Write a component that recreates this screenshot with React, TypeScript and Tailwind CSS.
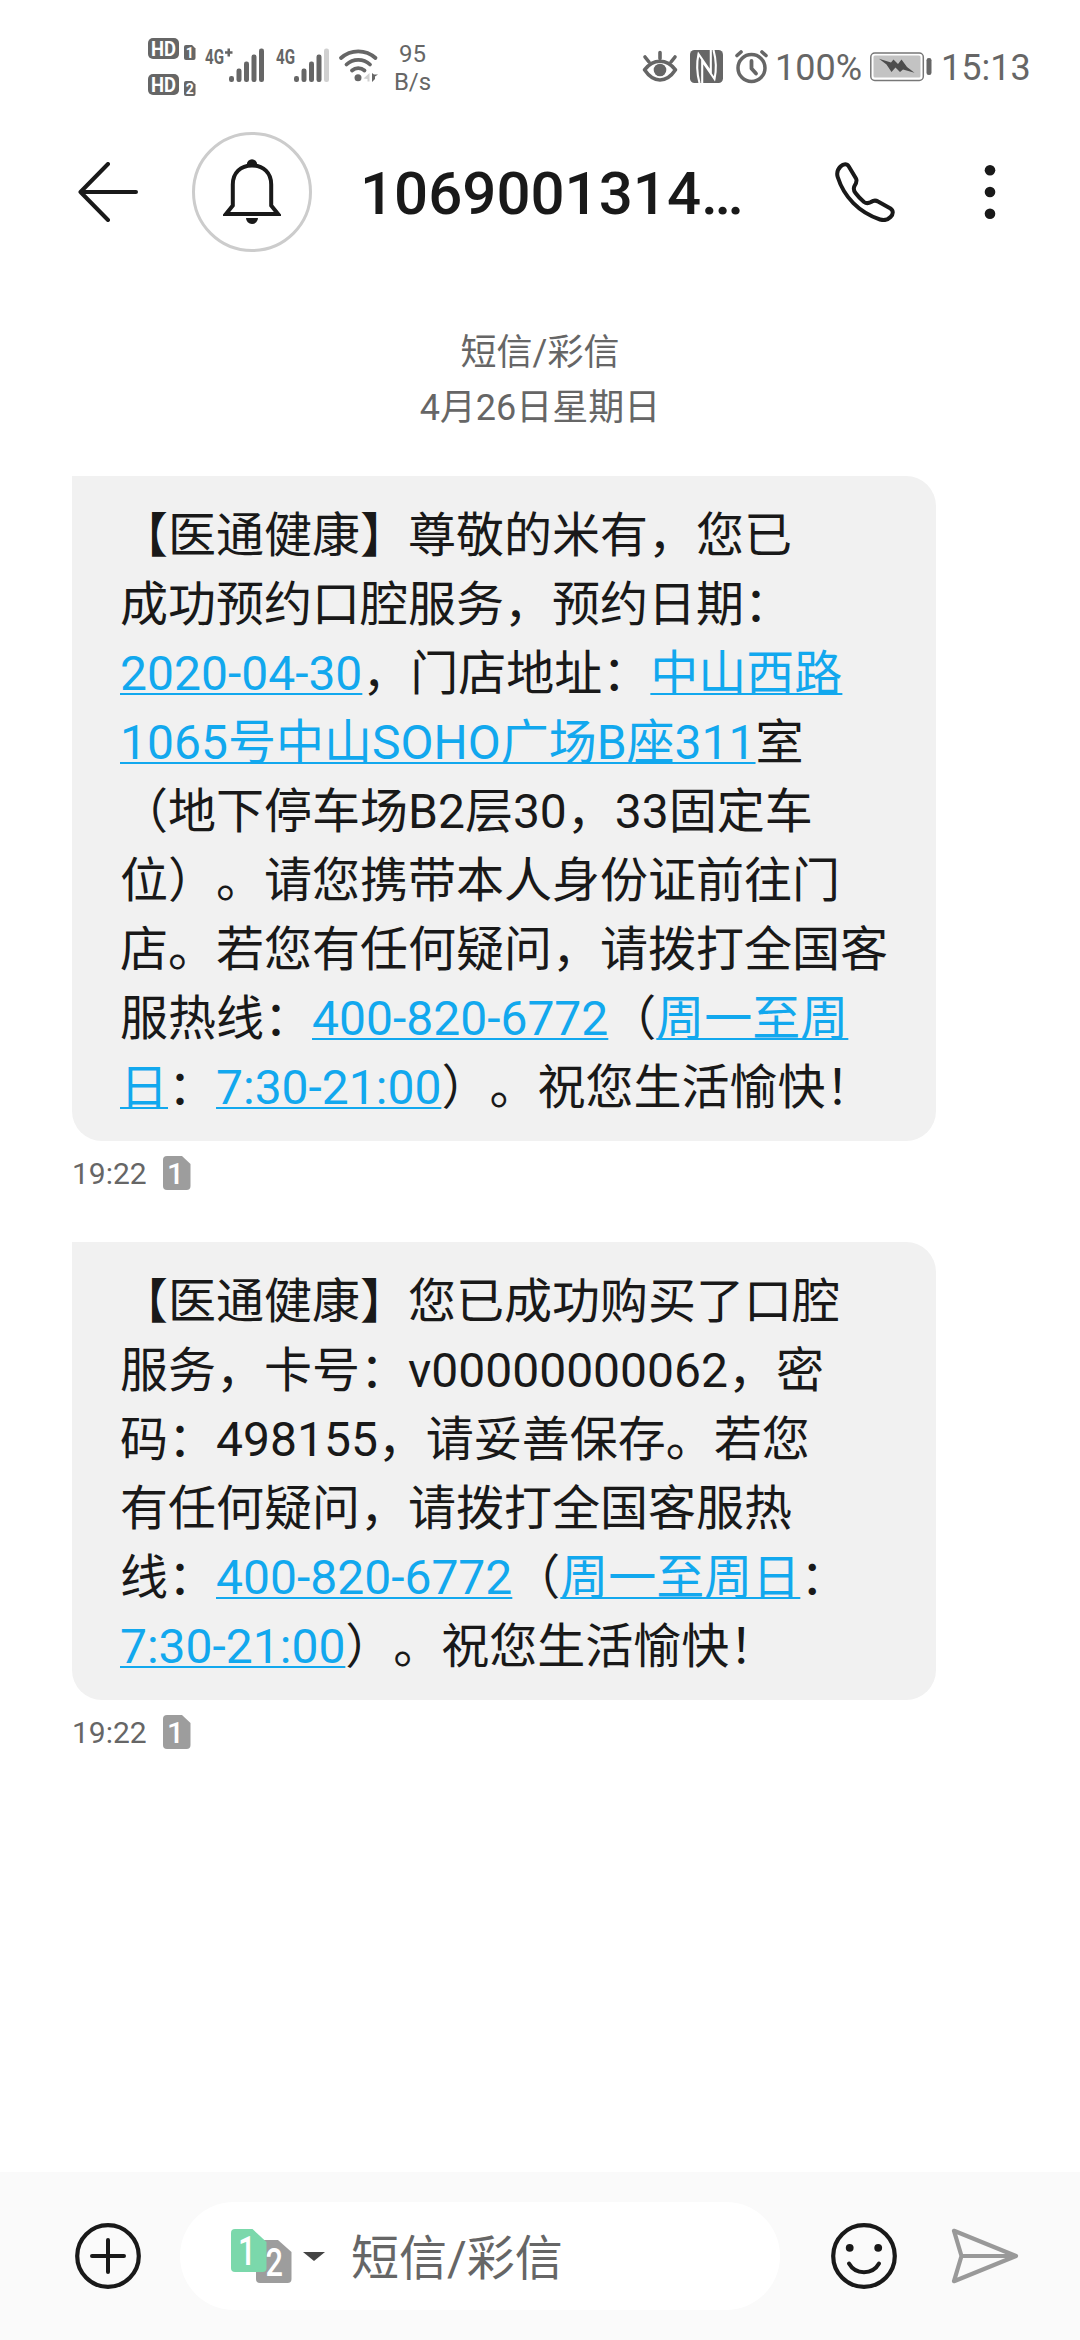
import { Fragment } from "react";
import type { ReactNode } from "react";

// A piece of a message line, links are shown underlined
interface Segment {
  text: string;
  link?: boolean;
}

interface Message {
  id: number;
  lines: Segment[][];
  time: string;
  sim: string;
}

const messages: Message[] = [
  {
    id: 1,
    time: "19:22",
    sim: "1",
    lines: [
      [{ text: "【医通健康】尊敬的米有，您已" }],
      [{ text: "成功预约口腔服务，预约日期：" }],
      [
        { text: "2020-04-30", link: true },
        { text: "，门店地址：" },
        { text: "中山西路", link: true },
      ],
      [{ text: "1065号中山SOHO广场B座311", link: true }, { text: "室" }],
      [{ text: "（地下停车场B2层30，33固定车" }],
      [{ text: "位）。请您携带本人身份证前往门" }],
      [{ text: "店。若您有任何疑问，请拨打全国客" }],
      [
        { text: "服热线：" },
        { text: "400-820-6772", link: true },
        { text: "（" },
        { text: "周一至周", link: true },
      ],
      [
        { text: "日", link: true },
        { text: "：" },
        { text: "7:30-21:00", link: true },
        { text: "）。祝您生活愉快！" },
      ],
    ],
  },
  {
    id: 2,
    time: "19:22",
    sim: "1",
    lines: [
      [{ text: "【医通健康】您已成功购买了口腔" }],
      [{ text: "服务，卡号：v00000000062，密" }],
      [{ text: "码：498155，请妥善保存。若您" }],
      [{ text: "有任何疑问，请拨打全国客服热" }],
      [
        { text: "线：" },
        { text: "400-820-6772", link: true },
        { text: "（" },
        { text: "周一至周日", link: true },
        { text: "：" },
      ],
      [
        { text: "7:30-21:00", link: true },
        { text: "）。祝您生活愉快！" },
      ],
    ],
  },
];

const HdIcon = () => (
  <svg width="48" height="60" viewBox="0 0 48 60" fill="#666">
    {["1", "2"].map((n, i) => (
      <g key={n} transform={`translate(0 ${i * 36})`}>
        <rect x="0" y="2" width="31" height="21" rx="5" />
        <text
          x="3"
          y="19.5"
          fontSize="21"
          fontWeight="700"
          fill="#fff"
          textLength="25"
          lengthAdjust="spacingAndGlyphs"
        >
          HD
        </text>
        <path d="M38 9h6l3.500 3.500V22a2 2 0 0 1-2 2H38a2 2 0 0 1-2-2V11a2 2 0 0 1 2-2Z" />
        <text x="41.700" y="21.500" fontSize="14" fontWeight="700" fill="#fff" textAnchor="middle">
          {n}
        </text>
      </g>
    ))}
  </svg>
);

interface SignalProps {
  label: string;
  labelWidth: number;
  barsX: number;
  strength: number;
  plus?: boolean;
  width: number;
}

const SignalIcon = ({ label, labelWidth, barsX, strength, plus, width }: SignalProps) => (
  <svg width={width} height="60" viewBox={`0 0 ${width} 60`} fill="#666">
    <text
      x="1"
      y="27.5"
      fontSize="20"
      fontWeight="700"
      textLength={labelWidth}
      lengthAdjust="spacingAndGlyphs"
    >
      {label}
    </text>
    {plus && <path d="M23.500 12.500h2.500v2.700H28.500v2.500H26v2.800h-2.500v-2.800H21v-2.500h2.500Z" />}
    {[6, 13.5, 20.5, 27.5, 33.5].map((h, i) => (
      <rect
        key={h}
        x={barsX + i * 7.5}
        y={46 - h}
        width="5"
        height={h}
        rx="2.2"
        fill={i < strength ? "#666" : "#d0d0d0"}
      />
    ))}
  </svg>
);

const WifiIcon = () => (
  <svg width="42" height="60" viewBox="0 0 42 60" fill="none" stroke="#666" strokeWidth="3.800" strokeLinecap="round">
    <path d="M3 22a25.500 25.500 0 0 1 34.500 0" />
    <path d="M8.500 28.500a17 17 0 0 1 23.500 0" />
    <path d="M14 34.500a9.500 9.500 0 0 1 12.500 0" />
    <circle cx="20" cy="41.800" r="3.500" fill="#666" stroke="none" />
    <path d="M31.500 37v8.500h-2V43l-4-.5Z" fill="#d0d0d0" stroke="none" />
    <path d="M34 37v9l3-3v-2.500l3-2H36Z" fill="#666" stroke="none" />
  </svg>
);

const EyeIcon = () => (
  <svg width="38" height="60" viewBox="0 0 38 60" fill="none" stroke="#666" strokeWidth="3.600" strokeLinecap="round">
    <path d="M3.500 33.800C8 28 13.500 25.200 19 25.200S30 28 34.500 33.800C30 40.500 24.500 44 19 44S8 40.500 3.500 33.800Z" strokeLinejoin="round" />
    <circle cx="19" cy="34" r="6.300" fill="#666" stroke="none" />
    <path d="M19 16.500v6M4 21l4 5M34 21l-4 5" />
  </svg>
);

const NfcIcon = () => (
  <svg width="33" height="60" viewBox="0 0 33 60" fill="none">
    <rect x="0" y="14" width="33" height="33" rx="4.500" fill="#666" />
    <path
      d="M9.500 47C6.500 36 6.500 27 8.500 18L20.800 36V14M23.500 14C26.500 25 26.500 34 24.500 43L12.200 25V47"
      stroke="#fff"
      strokeWidth="2.100"
    />
  </svg>
);

const AlarmIcon = () => (
  <svg width="33" height="60" viewBox="0 0 33 60" fill="none" stroke="#666" strokeWidth="3.500" strokeLinecap="round">
    <circle cx="16.500" cy="32" r="13.500" />
    <path d="M16.500 25v7.500l4.500 5" strokeWidth="3.800" strokeLinejoin="round" />
    <path d="M2 19.500l4-3.500M31 19.500l-4-3.500" strokeWidth="3.600" />
  </svg>
);

const BatteryIcon = () => (
  <svg width="62" height="60" viewBox="0 0 62 60">
    <rect x="0.800" y="17" width="52.500" height="27.500" rx="4" fill="#fff" stroke="#777" strokeWidth="1.500" />
    <rect x="3.500" y="19.500" width="47" height="22" rx="1.500" fill="#c3c3c3" />
    <path d="M9 22.700 21 26.500 23.500 23.500 28 28 31.500 23.500 37 31 44.500 36.800 33 33.500 30 36 25.500 31.500 21.500 36 16.500 28.500Z" fill="#4d4d4d" />
    <rect x="56.500" y="22" width="5" height="17" rx="2.300" fill="#666" />
  </svg>
);

const BackIcon = () => (
  <svg width="60" height="60" viewBox="0 0 60 60" fill="none" stroke="#191919" strokeWidth="4" strokeLinecap="round">
    <path d="M2.500 30H58M30 2 2.500 30 30 58" strokeLinejoin="round" />
  </svg>
);

const BellIcon = () => (
  <svg width="58" height="68" viewBox="0 0 58 68" fill="none" stroke="#191919" strokeWidth="4">
    <path d="M9.800 47.500V26.500C9.800 15 17.500 7.500 29 7.500S48.200 15 48.200 26.500V47.500L55 56H3Z" strokeLinejoin="miter" />
    <path d="M23.800 6.500a5.200 5.200 0 0 1 10.400 0ZM23 60h12a6 6 0 0 1-12 0Z" fill="#191919" stroke="none" />
  </svg>
);

const PhoneIcon = () => (
  <svg width="60" height="60" viewBox="0 0 60 60" fill="none" stroke="#191919" strokeWidth="4" strokeLinejoin="round">
    <path d="M5.500 4.500C8.500 1.500 12 1.500 13.800 4.500L21 16.500C22.500 19 21 21.500 19.500 24C18 27 19 29 20.500 31C23.500 35 26 37.500 29 40C31.500 41.800 33.500 41.500 36 40C38.500 38.300 40.500 38 43 39.500L55.500 46.500C58.500 48.500 58.500 52 55.500 55C52.500 58 49 58.800 45 57.500C24 50.500 9 35 2.700 15C1.500 11 2.500 7.500 5.500 4.500Z" />
  </svg>
);

const MoreIcon = () => (
  <svg width="12" height="60" viewBox="0 0 12 60" fill="#191919">
    <circle cx="6" cy="8.200" r="5.300" />
    <circle cx="6" cy="30" r="5.300" />
    <circle cx="6" cy="51.800" r="5.300" />
  </svg>
);

const SimBadge = ({ sim }: { sim: string }) => (
  <svg width="28" height="34" viewBox="0 0 28 34">
    <path d="M4 0H19L27.500 8V30a4 4 0 0 1-4 4H4a4 4 0 0 1-4-4V4a4 4 0 0 1 4-4Z" fill="#9d9d9d" />
    <text x="12.500" y="27.800" fontSize="30" fontWeight="500" fill="#fff" textAnchor="middle">
      {sim}
    </text>
  </svg>
);

// Two sim cards, the first one is the active one
const SimSwitch = () => (
  <svg width="62" height="56" viewBox="0 0 62 56">
    <path d="M29 12H47L60.500 24V51a4 4 0 0 1-4 4H29a4 4 0 0 1-4-4V16a4 4 0 0 1 4-4Z" fill="#9d9d9d" />
    <text x="34.500" y="47.500" fontSize="38" fontWeight="500" fill="#fff" textLength="17.500" lengthAdjust="spacingAndGlyphs">
      2
    </text>
    <path d="M4 1H21.500L35.500 14V40a4 4 0 0 1-4 4H4a4 4 0 0 1-4-4V5a4 4 0 0 1 4-4Z" fill="#7bd8ab" />
    <text x="7" y="37" fontSize="40" fontWeight="500" fill="#fff" textLength="18" lengthAdjust="spacingAndGlyphs">
      1
    </text>
  </svg>
);

const PlusIcon = () => (
  <svg width="66" height="66" viewBox="0 0 66 66" fill="none" stroke="#191919" strokeWidth="4.200" strokeLinecap="round">
    <circle cx="33" cy="33" r="30.800" />
    <path d="M33 17v32M17 33h32" strokeWidth="4" />
  </svg>
);

const SmileIcon = () => (
  <svg width="66" height="66" viewBox="0 0 66 66" fill="none" stroke="#191919" strokeWidth="4.200" strokeLinecap="round">
    <circle cx="33" cy="33" r="30.800" />
    <path d="M18 40.500c6.500 11.500 23.500 11.500 30 0" strokeWidth="4" />
    <circle cx="18.700" cy="24.800" r="3.900" fill="#191919" stroke="none" />
    <circle cx="47.200" cy="24.800" r="3.900" fill="#191919" stroke="none" />
  </svg>
);

const SendIcon = () => (
  <svg width="68" height="56" viewBox="0 0 68 56" fill="none" stroke="#999" strokeWidth="4.200" strokeLinejoin="round">
    <path d="M3 2.800 65 28 3 53.200 10.500 28ZM10.500 28H65" />
  </svg>
);

const Link = ({ children }: { children: ReactNode }) => (
  <span className="text-[#12a8ee] underline decoration-2 underline-offset-[3px] [text-decoration-skip-ink:none]">
    {children}
  </span>
);

const MessageBubble = ({ message }: { message: Message }) => (
  <div>
    <div className="w-[864px] rounded-[30px] rounded-tl-none bg-[#f1f1f1] pt-[25px] pb-[19px] pl-12 text-5xl text-[#191919]">
      {message.lines.map((line, i) => (
        <p key={i} className="h-[69px] whitespace-nowrap leading-[69px]">
          {line.map((part, j) =>
            part.link ? (
              <Link key={j}>{part.text}</Link>
            ) : (
              <Fragment key={j}>{part.text}</Fragment>
            )
          )}
        </p>
      ))}
    </div>
    <div className="mt-[15px] flex h-[34px] items-center text-[30px] leading-none text-[#666]">
      <span className="w-[91px] pt-[2px]">{message.time}</span>
      <SimBadge sim={message.sim} />
    </div>
  </div>
);

const StatusBar = () => (
  <div className="flex h-[132px] shrink-0 items-center pr-[49px] pl-[148px] text-4xl leading-none text-[#666]">
    <HdIcon />
    <div className="ml-2 flex gap-[10px]">
      <SignalIcon label="4G" labelWidth={19} barsX={25} strength={5} plus width={61} />
      <SignalIcon label="4G" labelWidth={19} barsX={19} strength={4} width={55} />
    </div>
    <div className="ml-2">
      <WifiIcon />
    </div>
    <div className="ml-3 w-[41px] pt-[3px] text-center text-2xl leading-[28px]">
      <div>95</div>
      <div>B/s</div>
    </div>
    <div className="ml-auto flex items-center">
      <EyeIcon />
      <div className="ml-[11px]">
        <NfcIcon />
      </div>
      <div className="ml-3">
        <AlarmIcon />
      </div>
      <span className="ml-[7px] w-[95px] pt-[3px]">100%</span>
      <BatteryIcon />
      <span className="ml-[9px] w-[90px] pt-[3px]">15:13</span>
    </div>
  </div>
);

const Header = () => (
  <div className="flex h-[120px] shrink-0 items-center pl-[78px]">
    <BackIcon />
    <div className="ml-[54px] flex size-[120px] items-center justify-center rounded-full border-3 border-[#ccc]">
      <BellIcon />
    </div>
    <h1 className="ml-[48px] w-[475px] pt-[4px] text-6xl leading-none font-medium text-[#191919]">1069001314…</h1>
    <PhoneIcon />
    <div className="ml-[89px]">
      <MoreIcon />
    </div>
  </div>
);

const InputBar = () => (
  <div className="flex h-[168px] shrink-0 items-center bg-[#fafafa] pl-[75px]">
    <PlusIcon />
    <div className="ml-[39px] flex h-[108px] w-[600px] items-center rounded-full bg-white pl-[51px] text-5xl text-[#666]">
      <SimSwitch />
      <svg className="ml-[10px]" width="22" height="9" viewBox="0 0 22 9">
        <path d="M0 0H22L11 9Z" fill="#444" />
      </svg>
      <span className="ml-[26px] pt-[5px] leading-none">短信/彩信</span>
    </div>
    <div className="ml-[51px]">
      <SmileIcon />
    </div>
    <div className="ml-[54px]">
      <SendIcon />
    </div>
  </div>
);

export default function App() {
  return (
    <div className="flex h-[2340px] w-[1080px] flex-col overflow-hidden bg-white font-[Roboto,'Noto_Sans_CJK_SC',sans-serif] [text-spacing-trim:space-all]">
      <StatusBar />
      <Header />
      <div className="grow px-[72px] pt-[74px]">
        <div className="text-center text-4xl leading-[55px] text-[#666]">
          <div>短信/彩信</div>
          <div>4月26日星期日</div>
        </div>
        <div className="mt-[40px] flex flex-col gap-[52px]">
          {messages.map((message) => (
            <MessageBubble key={message.id} message={message} />
          ))}
        </div>
      </div>
      <InputBar />
    </div>
  );
}
